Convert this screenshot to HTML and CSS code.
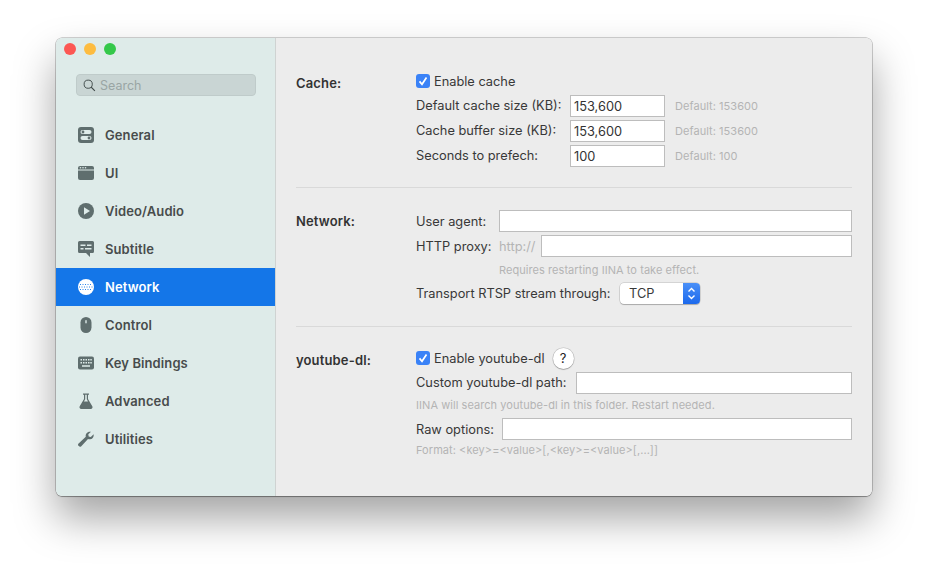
FILE: index.html
```
<!DOCTYPE html>
<html lang="en">
<head>
<meta charset="utf-8">
<title>Preferences</title>
<link rel="stylesheet" href="styles.css">
</head>
<body>
<div class="window">
  <aside class="sidebar">
    <div class="traffic">
      <span class="light light-red"></span>
      <span class="light light-yellow"></span>
      <span class="light light-green"></span>
    </div>
    <div class="search">
      <svg class="search-icon" viewBox="0 0 14 14"><circle cx="5.6" cy="5.6" r="4.4" fill="none" stroke="#3c4646" stroke-width="1"/><path d="M8.8 8.8 12.8 12.8" stroke="#3c4646" stroke-width="1.2" fill="none"/></svg>
      <span>Search</span>
    </div>
    <nav class="nav">
      <div class="item">
        <svg class="icon" viewBox="0 0 16 16"><rect width="16" height="16" rx="3" fill="#5f6e6e"/><rect x="2.5" y="3" width="11" height="4" rx="2" fill="#deebe9"/><rect x="2.5" y="9" width="11" height="4" rx="2" fill="#deebe9"/><circle cx="5" cy="5" r="1.4" fill="#5f6e6e"/><circle cx="11" cy="11" r="1.4" fill="#5f6e6e"/></svg>
        <span>General</span>
      </div>
      <div class="item">
        <svg class="icon" viewBox="0 0 16 16"><path d="M2 1h12a2 2 0 0 1 2 2v1.500H0V3a2 2 0 0 1 2-2Z" fill="#5f6e6e"/><path d="M0 5.500h16V13a2 2 0 0 1-2 2H2a2 2 0 0 1-2-2Z" fill="#5f6e6e"/><circle cx="2.500" cy="2.800" r=".8" fill="#deebe9"/><circle cx="5" cy="2.800" r=".8" fill="#deebe9"/><circle cx="7.500" cy="2.800" r=".8" fill="#deebe9"/></svg>
        <span>UI</span>
      </div>
      <div class="item">
        <svg class="icon" viewBox="0 0 16 16"><circle cx="8" cy="8" r="8" fill="#5f6e6e"/><path d="M6 4.300 12 8 6 11.700Z" fill="#deebe9"/></svg>
        <span>Video/Audio</span>
      </div>
      <div class="item">
        <svg class="icon" viewBox="0 0 16 16"><path d="M1.500 0h13A1.500 1.500 0 0 1 16 1.500v9a1.500 1.500 0 0 1-1.500 1.500H12v4l-4-4H1.500A1.500 1.500 0 0 1 0 10.500v-9A1.500 1.500 0 0 1 1.500 0Z" fill="#5f6e6e"/><path d="M2.500 3.500h5v1.500h-5ZM9 3.500h4.500v1.500H9ZM2.500 7h3v1.500h-3ZM7 7h6.500v1.500H7Z" fill="#deebe9"/></svg>
        <span>Subtitle</span>
      </div>
      <div class="item item-active">
        <svg class="icon" viewBox="0 0 16 16"><circle cx="8" cy="8" r="8" fill="#fff"/><path d="M2 5.500h12M1 8h14M2 10.500h12" fill="none" stroke="#1476e8" stroke-width=".9" stroke-dasharray="1 1.500"/></svg>
        <span>Network</span>
      </div>
      <div class="item">
        <svg class="icon" viewBox="0 0 16 16"><rect x="2.500" y="0" width="11" height="16" rx="5.500" fill="#5f6e6e"/><rect x="7.300" y="3" width="1.400" height="3.500" rx=".7" fill="#deebe9"/></svg>
        <span>Control</span>
      </div>
      <div class="item">
        <svg class="icon" viewBox="0 0 16 16"><rect y="1.500" width="16" height="13" rx="2" fill="#5f6e6e"/><path d="M2.500 4h1.500v1.500H2.500ZM5 4h1.500v1.500H5ZM7.500 4H9v1.500H7.500ZM10 4h1.500v1.500H10ZM12.300 4h1.500v1.500h-1.500ZM2.500 7h1.500v1.500H2.500ZM5 7h1.500v1.500H5ZM7.500 7H9v1.500H7.500ZM10 7h1.500v1.500H10ZM12.300 7h1.500v1.500h-1.500ZM4 10.200h8v1.600H4Z" fill="#deebe9"/></svg>
        <span>Key Bindings</span>
      </div>
      <div class="item">
        <svg class="icon" viewBox="0 0 16 16"><path d="M5 .500h6v1.300H10V6l4.300 7.300A1.800 1.800 0 0 1 12.800 16H3.200a1.800 1.800 0 0 1-1.500-2.700L6 6V1.800H5Z" fill="#5f6e6e"/><path d="M7.200 1.800h1.600v4.500l1.200 2.200H6l1.200-2.200Z" fill="#deebe9"/></svg>
        <span>Advanced</span>
      </div>
      <div class="item">
        <svg class="icon" viewBox="0 0 16 16"><path d="M15.600 3.200c.5 2.400-1 4.800-3.500 5-.8.100-1.500 0-2.100-.3L3.300 15.200a1.700 1.700 0 0 1-2.500-.1l-.2-.2a1.700 1.700 0 0 1 0-2.400L7.800 5.800C7.500 4.800 7.600 3.500 8.400 2.400 9.500.9 11.400.3 13 .8L10.300 3.300l.4 2.100 2.100.5Z" fill="#5f6e6e"/></svg>
        <span>Utilities</span>
      </div>
    </nav>
  </aside>
  <main class="main">
    <section class="section section-cache">
      <h2 class="heading">Cache:</h2>
      <div class="fields">
        <label class="check">
          <svg class="checkbox" viewBox="0 0 14 14"><rect width="14" height="14" rx="3" fill="#3a82f7"/><path d="M3.500 7.400 6 10.300 10.500 3.500" fill="none" stroke="#fff" stroke-width="1.700"/></svg>
          <span>Enable cache</span>
        </label>
        <div class="row">
          <span class="label label-cache">Default cache size (KB):</span>
          <div class="input input-num">153,600</div>
          <span class="note">Default: 153600</span>
        </div>
        <div class="row">
          <span class="label label-cache">Cache buffer size (KB):</span>
          <div class="input input-num">153,600</div>
          <span class="note">Default: 153600</span>
        </div>
        <div class="row">
          <span class="label label-cache">Seconds to prefech:</span>
          <div class="input input-num">100</div>
          <span class="note">Default: 100</span>
        </div>
      </div>
    </section>
    <section class="section section-network">
      <h2 class="heading">Network:</h2>
      <div class="fields">
        <div class="row row-tight">
          <span class="label label-agent">User agent:</span>
          <div class="input input-grow"></div>
        </div>
        <div class="row row-tight">
          <span class="label label-proxy">HTTP proxy:</span>
          <span class="prefix">http://</span>
          <div class="input input-grow"></div>
        </div>
        <div class="hint hint-indent">Requires restarting IINA to take effect.</div>
        <div class="row row-select">
          <span class="label label-rtsp">Transport RTSP stream through:</span>
          <div class="select">
            <span class="select-value">TCP</span>
            <span class="stepper">
              <svg viewBox="0 0 17 21" class="stepper-arrows"><path d="M5.500 8.500 8.500 5.500 11.500 8.500M5.500 12.500 8.500 15.500 11.500 12.500" fill="none" stroke="#fff" stroke-width="1.400"/></svg>
            </span>
          </div>
        </div>
      </div>
    </section>
    <section class="section section-youtube">
      <h2 class="heading">youtube-dl:</h2>
      <div class="fields">
        <div class="row row-check">
          <label class="check">
            <svg class="checkbox" viewBox="0 0 14 14"><rect width="14" height="14" rx="3" fill="#3a82f7"/><path d="M3.500 7.400 6 10.300 10.500 3.500" fill="none" stroke="#fff" stroke-width="1.700"/></svg>
            <span>Enable youtube-dl</span>
          </label>
          <span class="help">?</span>
        </div>
        <div class="row row-tight">
          <span class="label label-path">Custom youtube-dl path:</span>
          <div class="input input-grow"></div>
        </div>
        <div class="hint hint-short">IINA will search youtube-dl in this folder. Restart needed.</div>
        <div class="row row-tight">
          <span class="label label-raw">Raw options:</span>
          <div class="input input-grow"></div>
        </div>
        <div class="hint hint-last">Format: &lt;key&gt;=&lt;value&gt;[,&lt;key&gt;=&lt;value&gt;[,...]]</div>
      </div>
    </section>
  </main>
</div>
</body>
</html>
```
FILE: styles.css
```
* { box-sizing: border-box; }
html, body { margin: 0; height: 100%; }
body {
  background: #fff;
  padding: 38px 56px 0;
  font-family: Inter, "Liberation Sans", sans-serif;
  overflow: hidden;
}
.window {
  width: 816px;
  height: 458px;
  display: flex;
  border-radius: 6px;
  overflow: hidden;
  box-shadow: 0 0 0 .5px rgba(0,0,0,.35), 0 1px 1px rgba(0,0,0,.25), 0 22px 42px rgba(0,0,0,.36);
}
.sidebar {
  width: 220px;
  flex: none;
  background: #deebe9;
  border-right: 1px solid #cfd3d2;
}
.traffic {
  display: flex;
  gap: 8px;
  padding: 5px 0 0 8px;
}
.light { width: 12px; height: 12px; border-radius: 50%; }
.light-red { background: #fc5753; }
.light-yellow { background: #fdbc40; }
.light-green { background: #34c84a; }
.search {
  margin: 19px 19px 0 20px;
  height: 22px;
  display: flex;
  align-items: center;
  gap: 4px;
  padding-left: 6px;
  background: #c9d5d4;
  border: 1px solid #bfcbca;
  border-radius: 4px;
  font-size: 12.500px;
  color: #99a5a4;
}
.search-icon { width: 13px; height: 13px; flex: none; }
.nav { margin-top: 20px; }
.item {
  height: 38px;
  display: flex;
  align-items: center;
  gap: 11px;
  padding-left: 22px;
  font-size: 13px;
  letter-spacing: .1px;
  font-weight: 600;
  color: #484c4c;
}
.item-active { background: #1476e8; color: #fff; }
.icon { width: 16px; height: 16px; flex: none; }
.main {
  flex: 1;
  background: #ececec;
  padding: 33px 20px 0;
  color: #383838;
  font-size: 12.800px;
}
.section {
  display: grid;
  grid-template-columns: 120px 1fr;
  border-bottom: 1px solid #d9d9d9;
}
.section-cache { padding-bottom: 20px; }
.section-network { padding: 22px 0; }
.section-youtube { padding-top: 21px; border-bottom: 0; }
.heading {
  margin: 0;
  font-size: 13px;
  letter-spacing: .15px;
  font-weight: 600;
  line-height: 22px;
  color: #333;
}
.section-cache .heading, .section-youtube .heading { padding-top: 1px; }
.fields { display: flex; flex-direction: column; gap: 3px; }
.check { display: flex; align-items: center; gap: 4px; height: 20px; }
.checkbox { width: 14px; height: 14px; flex: none; }
.section-cache .check { margin-bottom: 1px; }
.row { display: flex; align-items: center; height: 22px; }
.label-cache { width: 154px; flex: none; padding-bottom: 1px; }
.label-agent { width: 83px; flex: none; }
.label-proxy { width: 83px; flex: none; }
.label-path { width: 160px; flex: none; padding-bottom: 1px; }
.label-raw { width: 86px; flex: none; }
.label-rtsp { width: 204px; flex: none; }
.prefix { width: 42px; flex: none; color: #b4b4b4; }
.input {
  height: 22px;
  background: #fff;
  border: 1px solid #bdbdbd;
  padding-left: 3px;
  line-height: 21px;
  color: #333;
}
.input-num { width: 95px; flex: none; margin-right: 10px; }
.input-grow { flex: 1; }
.note { font-size: 11px; letter-spacing: .05px; color: #b4b4b4; }
.hint { font-size: 11px; letter-spacing: .06px; color: #b4b4b4; height: 20px; line-height: 20px; }
.hint-indent { padding-left: 83px; }
.hint-short { height: 18px; line-height: 16px; }
.hint-last { height: 14px; line-height: 14px; }
.row-select { height: 21px; }
.select {
  width: 80px;
  height: 21px;
  display: flex;
  background: #fff;
  border-radius: 4px;
  box-shadow: 0 0 0 .5px rgba(0,0,0,.2), 0 1px 1px rgba(0,0,0,.2);
  overflow: hidden;
}
.select-value { flex: 1; padding-left: 9px; line-height: 21px; }
.stepper { width: 17px; flex: none; background: linear-gradient(#4a90f8, #1c69ec); display: flex; }
.stepper-arrows { width: 17px; height: 21px; }
.row-check { height: 20px; margin-bottom: 1px; }
.row-check .check { margin-right: 8px; }
.help {
  width: 21px;
  height: 21px;
  border-radius: 50%;
  background: #fff;
  box-shadow: 0 0 0 .5px rgba(0,0,0,.2), 0 1px 1px rgba(0,0,0,.2);
  text-align: center;
  line-height: 21px;
  font-size: 13px;
  font-weight: 400;
  color: #222;
}
```
